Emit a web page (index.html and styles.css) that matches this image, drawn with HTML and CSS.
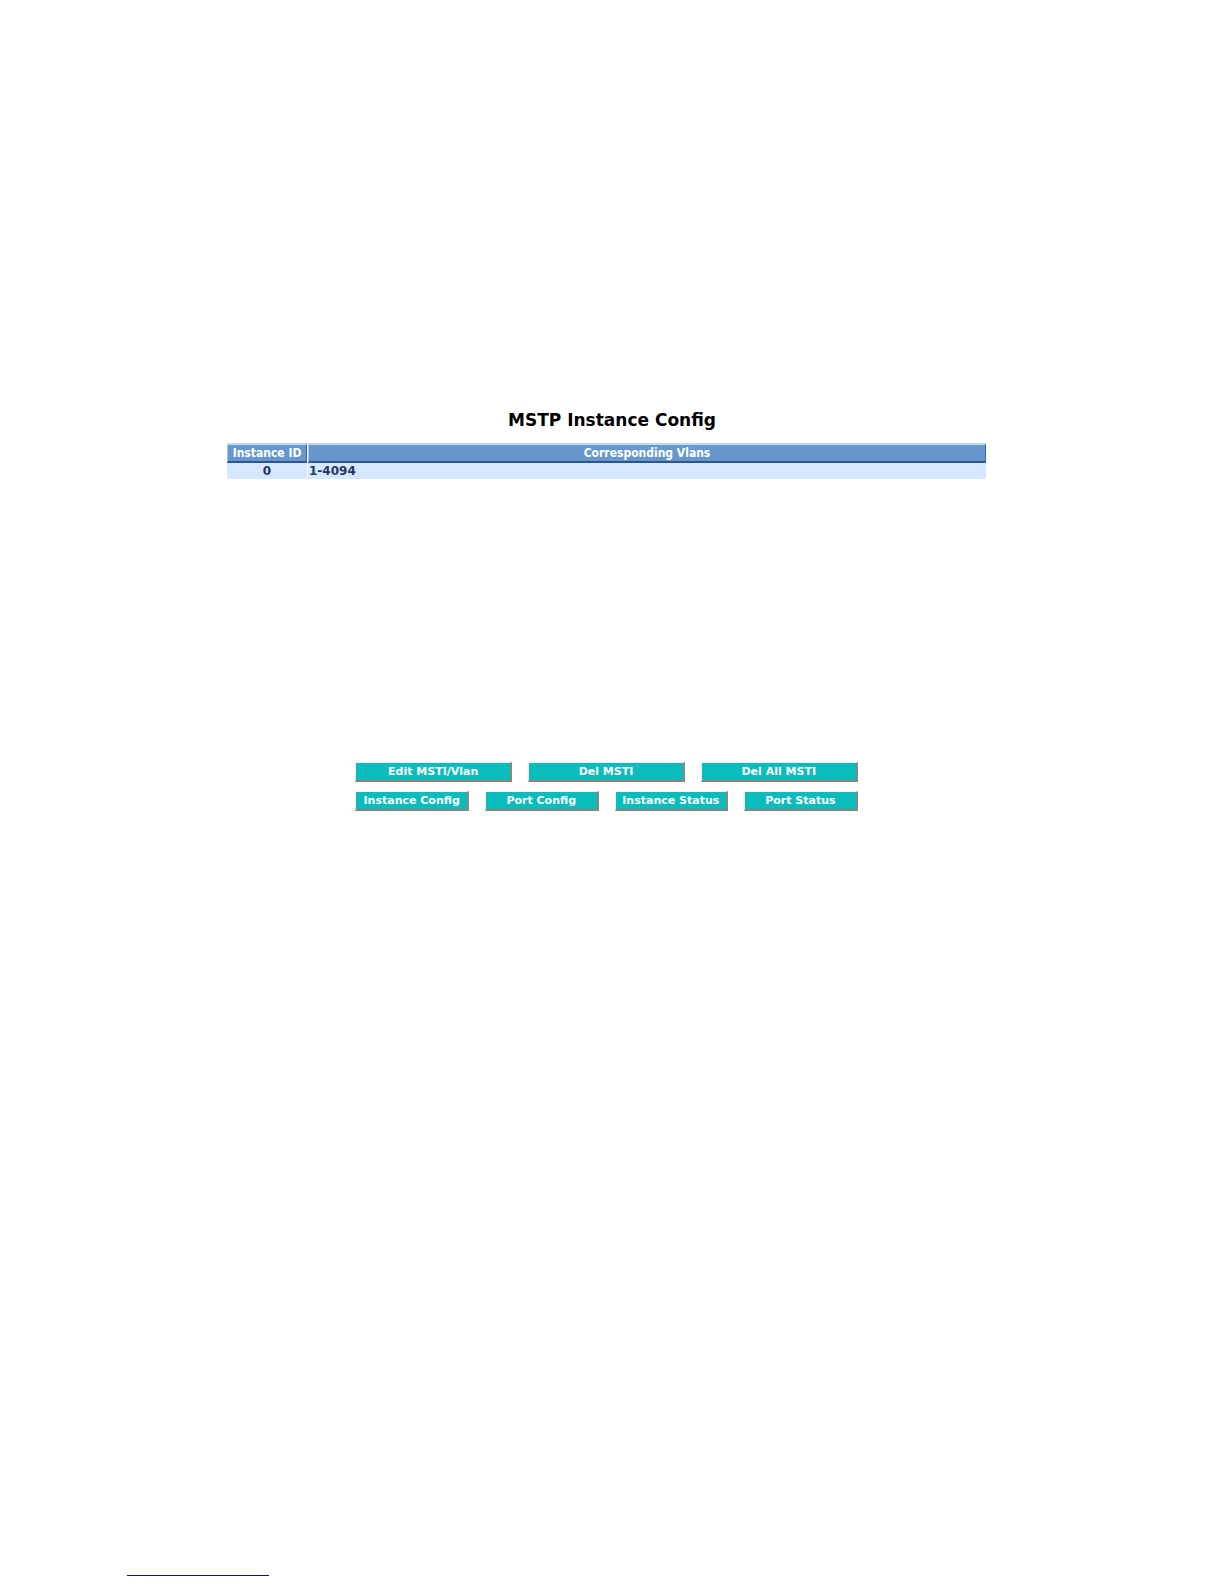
FILE: index.html
```
<!DOCTYPE html>
<html lang="en">
<head>
  <meta charset="UTF-8">
  <title>MSTP Instance Config</title>
  <link rel="stylesheet" href="styles.css">
</head>
<body>

  <main class="page">
    <h1 class="title">MSTP Instance Config</h1>

    <div class="content">
      <table class="instances">
        <thead>
          <tr>
            <th class="col-id" scope="col">Instance ID</th>
            <th scope="col">Corresponding Vlans</th>
          </tr>
        </thead>
        <tbody>
          <tr>
            <td class="col-id">0</td>
            <td>1-4094</td>
          </tr>
        </tbody>
      </table>

      <div class="actions">
        <div class="button-row">
          <button type="button">Edit MSTI/Vlan</button>
          <button type="button">Del MSTI</button>
          <button type="button">Del All MSTI</button>
        </div>
        <div class="button-row">
          <button type="button">Instance Config</button>
          <button type="button">Port Config</button>
          <button type="button">Instance Status</button>
          <button type="button">Port Status</button>
        </div>
      </div>
    </div>
  </main>

  <footer class="footer">
    <hr class="footer-line">
  </footer>

</body>
</html>
```

FILE: styles.css
```
* {
  box-sizing: border-box;
}

body {
  margin: 0;
  min-height: 100vh;
  display: flex;
  flex-direction: column;
  background: #fff;
  font-family: Verdana, "DejaVu Sans", sans-serif;
}

.page {
  flex: 1;
  padding-top: 408px;
}

.title {
  margin: 0 0 11px;
  font-size: 17px;
  line-height: 24px;
  text-align: center;
  color: #000;
}

.content {
  margin: 0 237px 0 226px;
}

/* instance list */
.instances {
  width: 100%;
  border-collapse: separate;
  border-spacing: 1px 0;
  font-size: 12px;
  font-weight: bold;
  line-height: 16px;
}

.instances th {
  padding: 0 1px;
  background: #6797cc;
  color: #fff;
  font-family: "DejaVu Sans Condensed", "DejaVu Sans", sans-serif;
  border-style: solid;
  border-width: 2px 1px;
  border-color: #c0dcf0 #336699 #2f5688 #a4c6e8;
}

.instances td {
  padding: 0 1px;
  background: #d6e8ff;
  color: #26365e;
}

.instances .col-id {
  width: 80px;
  text-align: center;
  white-space: nowrap;
}

/* buttons */
.actions {
  width: 66%;
  margin: 283px auto 0;
  display: flex;
  flex-direction: column;
  gap: 9px;
}

.button-row {
  display: flex;
  gap: 16px;
}

.button-row button {
  flex: 1;
  height: 20px;
  padding: 0;
  border-style: solid;
  border-width: 1px 2px 2px 1px;
  border-color: #e6f7f7 #8c8474 #8c8474 #e6f7f7;
  background: #0bbcbd;
  color: #fff;
  font-family: inherit;
  font-size: 11px;
  font-weight: bold;
  line-height: 16px;
  white-space: nowrap;
  cursor: pointer;
}

.footer {
  padding: 0 127px 8px;
}

.footer-line {
  width: 142px;
  margin: 0;
  border: 0;
  border-top: 1px solid #10108a;
}
```
